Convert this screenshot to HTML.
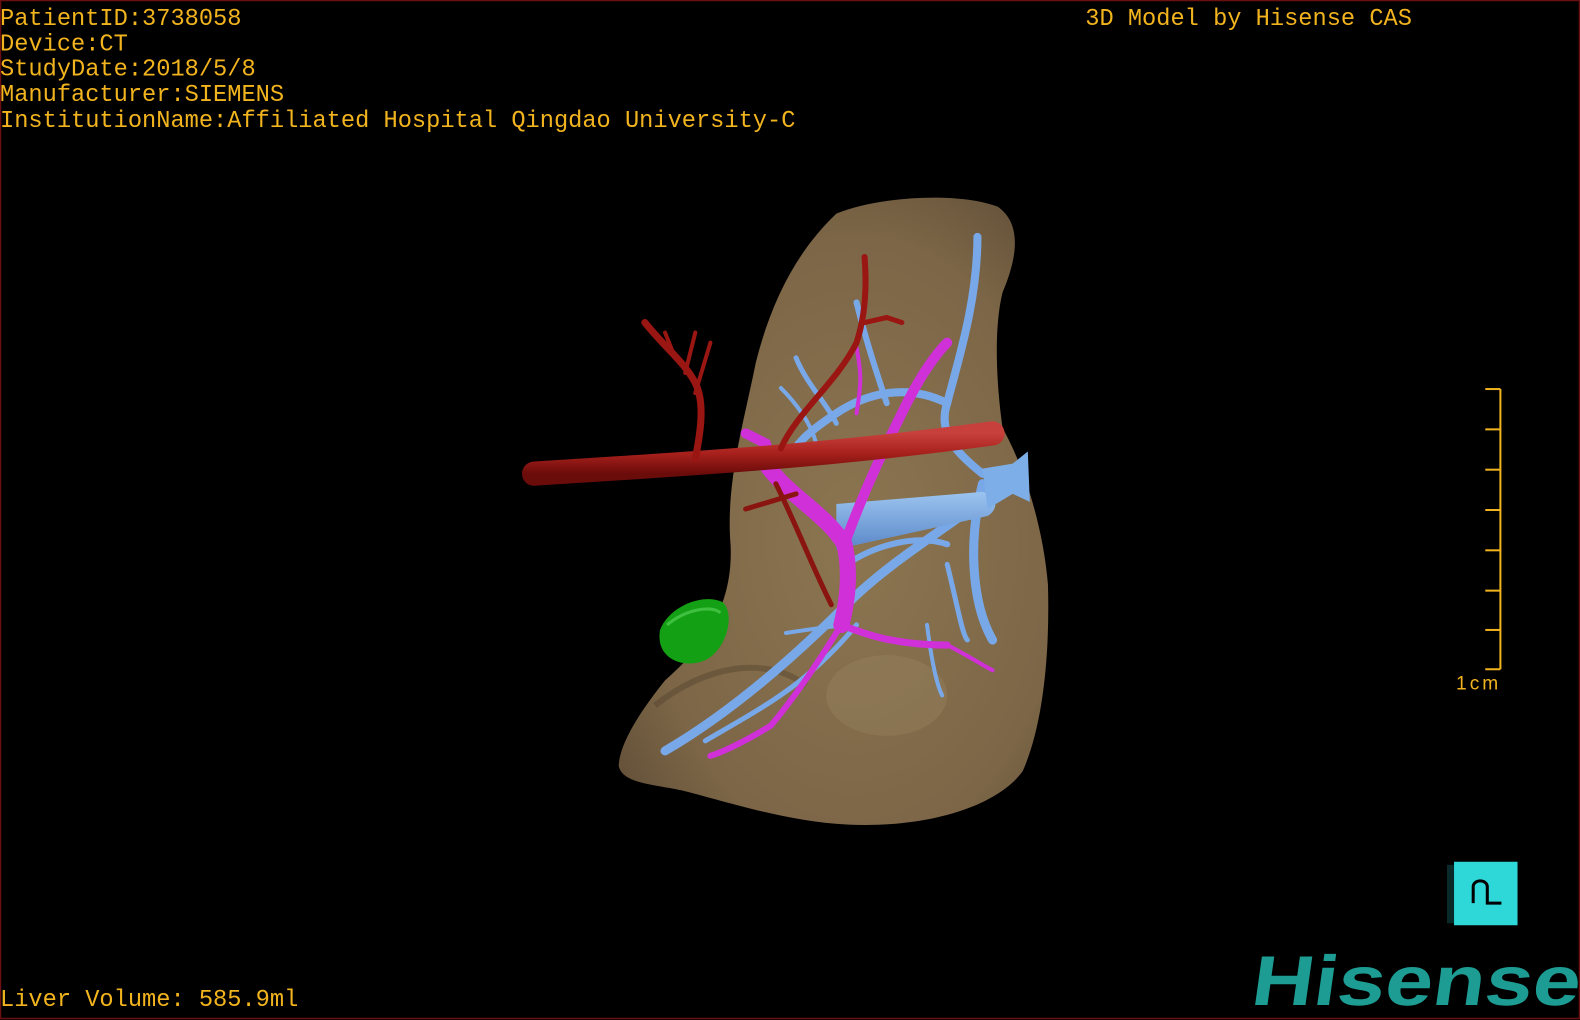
<!DOCTYPE html>
<html><head><meta charset="utf-8">
<style>
html,body{margin:0;padding:0;background:#000;width:1580px;height:1020px;overflow:hidden}
svg{display:block}
text{font-family:"Liberation Mono",monospace;fill:#f2b41e;font-size:23.5px}
</style></head><body>
<svg width="1580" height="1020" viewBox="0 0 1568 1012" preserveAspectRatio="none" xmlns="http://www.w3.org/2000/svg">
<defs>
<radialGradient id="lv" cx="0.55" cy="0.55" r="0.65">
<stop offset="0" stop-color="#8c7550"/><stop offset="0.75" stop-color="#7c6647"/><stop offset="1" stop-color="#66533a"/>
</radialGradient>
<linearGradient id="rd" x1="0" y1="0" x2="0" y2="1"><stop offset="0" stop-color="#c8403c"/><stop offset="0.5" stop-color="#a8201c"/><stop offset="1" stop-color="#6a0c0a"/></linearGradient>
<linearGradient id="bl" x1="0" y1="0" x2="0" y2="1"><stop offset="0" stop-color="#9cc4f0"/><stop offset="1" stop-color="#5a88c8"/></linearGradient>
</defs>
<rect width="1568" height="1012" fill="#000"/>
<rect x="0.5" y="0.5" width="1567" height="1010" fill="none" stroke="#6a1010" stroke-width="1.5"/>

<path d="M830,212 C870,195 950,190 990,205 C1012,220 1012,250 995,290 C985,330 990,390 995,425 C1015,460 1035,520 1040,580 C1042,650 1035,720 1015,765 C990,800 920,822 840,818 C780,815 720,795 680,785 C650,778 618,778 614,760 C615,735 640,700 660,675 C700,640 728,600 725,540 C720,480 738,420 750,360 C765,300 790,250 830,212 Z" fill="url(#lv)"/>
<path d="M650,700 C700,660 760,650 800,680" stroke="#4e3e2a" stroke-width="6" fill="none" opacity="0.4"/>
<ellipse cx="880" cy="690" rx="60" ry="40" fill="#a08c68" opacity="0.3"/>

<g stroke="#79a8e8" fill="none" stroke-linecap="round">
<path d="M660,745 C720,710 780,660 840,600 C880,560 930,530 970,500" stroke-width="9"/>
<path d="M700,735 C760,700 800,680 850,620" stroke-width="5"/>
<path d="M970,235 C970,300 950,360 940,400 C930,430 950,450 975,470" stroke-width="8"/>
<path d="M940,400 C900,380 860,390 830,410 C800,430 790,440 780,460" stroke-width="8"/>
<path d="M850,300 C860,340 870,370 880,400" stroke-width="6"/>
<path d="M790,355 C800,380 820,400 830,420" stroke-width="5"/>
<path d="M775,385 C790,400 805,420 810,440" stroke-width="4"/>
<path d="M975,480 C960,540 965,600 985,635" stroke-width="9"/>
<path d="M940,560 C950,600 955,630 960,635" stroke-width="5"/>
<path d="M920,620 C925,660 930,680 935,690" stroke-width="4"/>
<path d="M840,560 C870,540 910,530 940,540" stroke-width="6"/>
<path d="M780,628 C800,625 820,622 840,620" stroke-width="4"/>
</g>
<path d="M830,500 L975,488 C990,490 992,505 980,512 L830,545 Z" fill="url(#bl)"/>
<path d="M975,465 L1005,460 L1020,448 L1022,498 L1005,490 L980,505 Z" fill="#7eaee8"/>

<g stroke="#d030d8" fill="none" stroke-linecap="round">
<path d="M760,460 C780,490 820,510 838,540 C845,570 840,600 835,620" stroke-width="16"/>
<path d="M838,540 C860,480 880,440 900,400 C915,370 930,350 940,340" stroke-width="10"/>
<path d="M835,620 C860,630 890,640 940,640" stroke-width="7"/>
<path d="M835,620 C810,660 790,690 765,720 C740,735 720,745 705,750" stroke-width="6"/>
<path d="M940,640 C960,650 975,660 985,665" stroke-width="4"/>
<path d="M740,430 L760,440 L770,470" stroke-width="10"/>
<path d="M850,410 C855,380 855,370 850,345" stroke-width="4"/>
</g>

<g stroke-linecap="round" fill="none">
<path d="M530,470 C650,462 800,455 985,430" stroke="url(#rd)" stroke-width="24"/>
<path d="M775,445 C790,410 830,380 850,340 C860,310 860,280 858,255" stroke="#9a1612" stroke-width="6"/>
<path d="M858,320 L880,315 L895,320" stroke="#9a1612" stroke-width="5"/>
<path d="M690,455 C695,430 700,400 690,380 C680,360 660,345 640,320" stroke="#9a1612" stroke-width="7"/>
<path d="M690,390 L705,340 M670,355 L660,330 M680,370 L690,330" stroke="#9a1612" stroke-width="4"/>
<path d="M770,480 C790,520 805,560 825,600" stroke="#8a1410" stroke-width="5"/>
<path d="M740,505 L790,490" stroke="#8a1410" stroke-width="5"/>
</g>

<path d="M655,625 C665,600 700,588 718,598 C730,612 720,645 700,655 C680,664 650,655 655,625 Z" fill="#14a014"/>
<path d="M662,620 C680,605 705,600 715,608" stroke="#40c040" stroke-width="3" fill="none"/>

<text x="0" y="25">PatientID:3738058</text>
<text x="0" y="50">Device:CT</text>
<text x="0" y="75">StudyDate:2018/5/8</text>
<text x="0" y="100">Manufacturer:SIEMENS</text>
<text x="0" y="126">InstitutionName:Affiliated Hospital Qingdao University-C</text>
<text x="1077" y="25">3D Model by Hisense CAS</text>
<text x="0" y="998">Liver Volume: 585.9ml</text>

<g stroke="#f2b41e" stroke-width="2">
<line x1="1489" y1="386" x2="1489" y2="664"/>
<line x1="1474" y1="386" x2="1489" y2="386"/>
<line x1="1474" y1="426" x2="1489" y2="426"/>
<line x1="1474" y1="466" x2="1489" y2="466"/>
<line x1="1474" y1="506" x2="1489" y2="506"/>
<line x1="1474" y1="546" x2="1489" y2="546"/>
<line x1="1474" y1="586" x2="1489" y2="586"/>
<line x1="1474" y1="625" x2="1489" y2="625"/>
<line x1="1474" y1="664" x2="1489" y2="664"/>
</g>
<text x="1445" y="684" style="font-family:'Liberation Sans',sans-serif;font-size:19px;letter-spacing:3px">1cm</text>

<rect x="1436" y="858" width="8" height="58" fill="#0a2a2a"/>
<rect x="1443" y="855" width="63" height="63" fill="#2ed8d8"/>
<path d="M1462,896 L1462,880 C1462,872 1476,872 1476,880 L1476,896 L1490,896" stroke="#000" stroke-width="3" fill="none"/>

<text x="1240" y="997" transform="skewX(-8) translate(140,0)" style="font-family:'Liberation Sans',sans-serif;font-weight:bold;font-size:70px;fill:#1c9c92" textLength="326" lengthAdjust="spacingAndGlyphs">Hisense</text>
</svg>
</body></html>
